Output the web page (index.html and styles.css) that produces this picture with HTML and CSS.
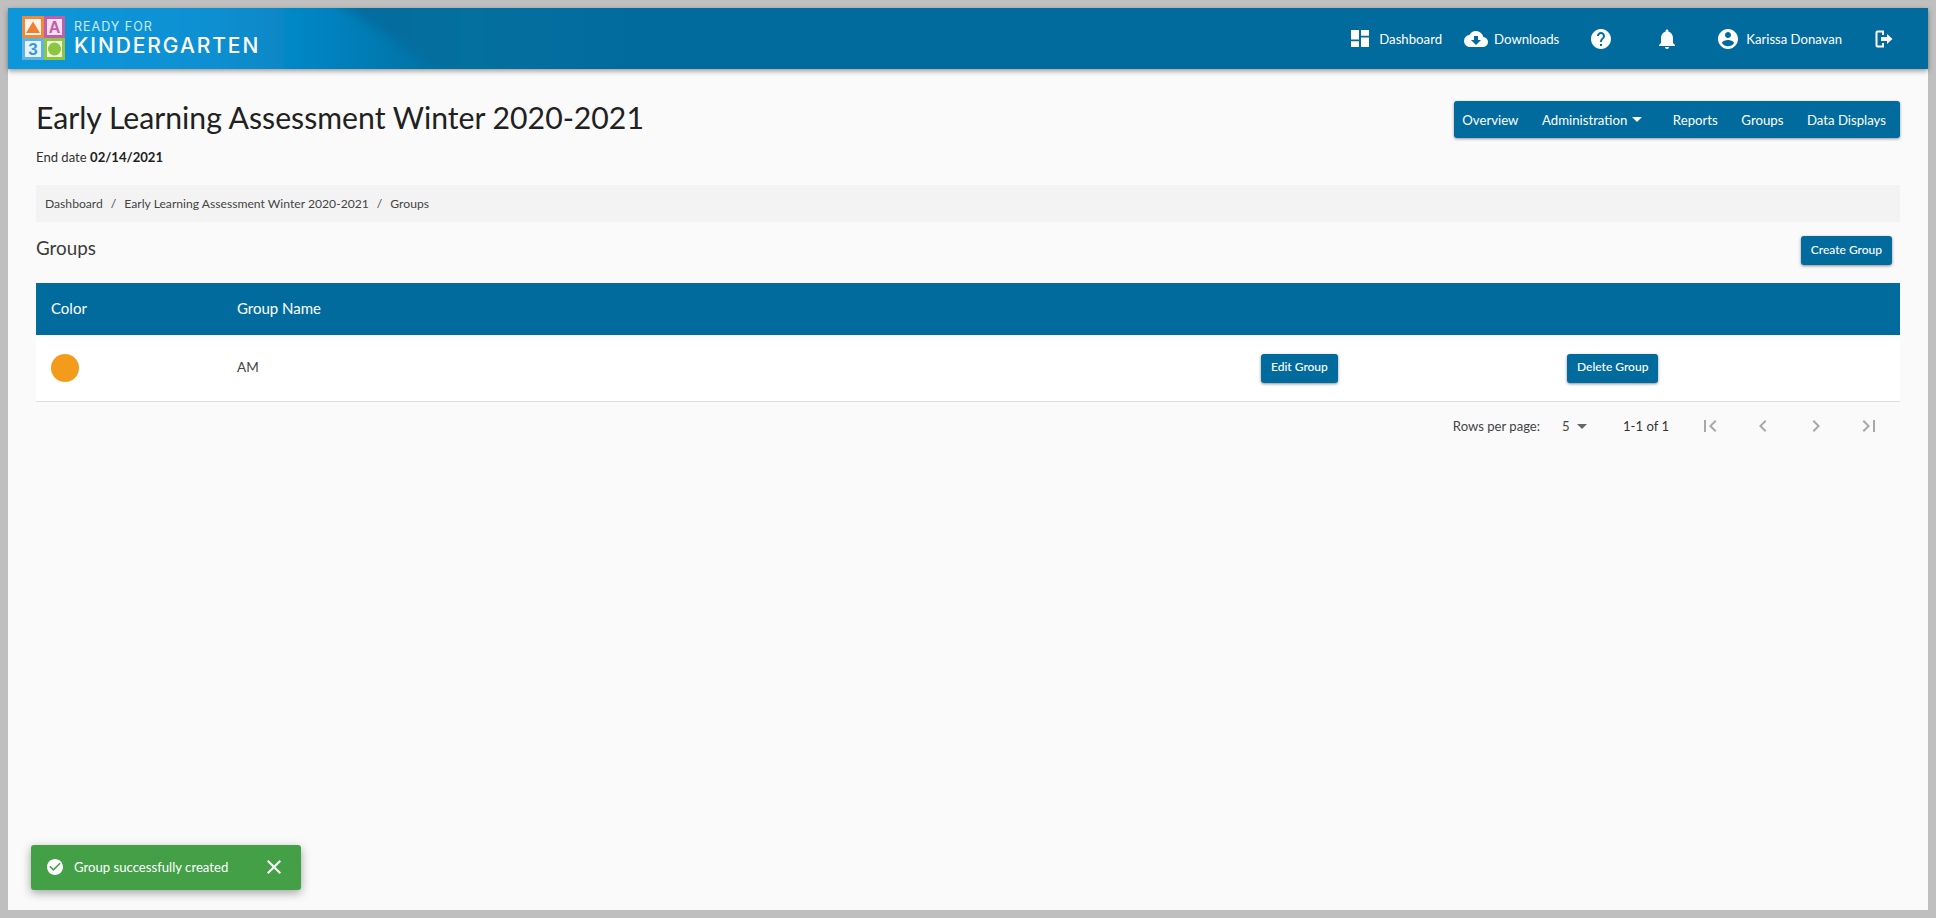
FILE: index.html
```html
<!DOCTYPE html>
<html lang="en">
<head>
<meta charset="utf-8">
<title>Groups</title>
<link rel="stylesheet" href="styles.css">
</head>
<body>
<div class="frame">
  <header class="topbar">
    <svg class="art" width="620" height="61" viewBox="0 0 620 61" aria-hidden="true">
      <defs>
        <linearGradient id="bright" x1="0" y1="0" x2="1" y2="0">
          <stop offset="0" stop-color="#0b97da"/>
          <stop offset=".45" stop-color="#0891d3"/>
          <stop offset=".7" stop-color="#0684c2"/>
          <stop offset="1" stop-color="#046f9f"/>
        </linearGradient>
        <linearGradient id="fade" x1="0" y1="0" x2="1" y2="0">
          <stop offset="0" stop-color="#04699d"/>
          <stop offset=".5" stop-color="#04709f"/>
          <stop offset="1" stop-color="#026b9e"/>
        </linearGradient>
        <filter id="soft" x="-5%" width="110%"><feGaussianBlur stdDeviation="6"/></filter>
      </defs>
      <rect x="300" y="0" width="320" height="61" fill="url(#fade)"/>
      <polygon points="-20,-20 310,-20 445,75 -20,75" fill="url(#bright)" filter="url(#soft)"/>
    </svg>
    <div class="brand">
      <svg class="blocks" width="43" height="44" viewBox="0 0 43 44">
        <rect x="0" y="0" width="22" height="22" fill="#ef8a3c"/>
        <rect x="22" y="0" width="21" height="22" fill="#c05fa8"/>
        <rect x="0" y="22" width="22" height="22" fill="#5fb2e6"/>
        <rect x="22" y="22" width="21" height="22" fill="#8dc63f"/>
        <rect x="3" y="3" width="16" height="16" fill="#fdf3ea"/>
        <rect x="25" y="3" width="15" height="16" fill="#f6dff0"/>
        <rect x="3" y="25" width="16" height="16" fill="#e6f3fb"/>
        <rect x="25" y="25" width="15" height="16" fill="#eef6df"/>
        <path d="M11 5.5 L18 17 H4 Z" fill="#ef8033"/>
        <circle cx="32.5" cy="33" r="6.5" fill="#8dc63f"/>
        <text x="32.5" y="17" text-anchor="middle" class="blockA">A</text>
        <text x="11" y="39" text-anchor="middle" class="block3">3</text>
      </svg>
      <div class="brandtext">
        <span class="ready">READY FOR</span>
        <span class="kinder">KINDERGARTEN</span>
      </div>
    </div>
    <nav class="topnav">
      <a class="toplink dash">
        <svg width="18" height="17" viewBox="3 3 18 18" preserveAspectRatio="none" fill="#fff"><path d="M3 13h8V3H3v10zm0 8h8v-6H3v6zm10 0h8V11h-8v10zm0-18v6h8V3h-8z"/></svg>
        <span>Dashboard</span>
      </a>
      <a class="toplink down">
        <svg width="24" height="24" viewBox="0 0 24 24" fill="#fff"><path d="M19.35 10.04A7.49 7.49 0 0 0 12 4C9.11 4 6.6 5.64 5.35 8.04A5.994 5.994 0 0 0 0 14c0 3.31 2.69 6 6 6h13c2.76 0 5-2.24 5-5 0-2.64-2.05-4.78-4.65-4.96zM17 13l-5 5-5-5h3V9h4v4h3z"/></svg>
        <span>Downloads</span>
      </a>
      <a class="toplink help">
        <svg width="24" height="24" viewBox="0 0 24 24" fill="#fff"><path d="M12 2C6.48 2 2 6.48 2 12s4.48 10 10 10 10-4.48 10-10S17.52 2 12 2zm1 17h-2v-2h2v2zm2.07-7.75l-.9.92C13.45 12.9 13 13.5 13 15h-2v-.5c0-1.1.45-2.1 1.17-2.83l1.24-1.26c.37-.36.59-.86.59-1.41 0-1.1-.9-2-2-2s-2 .9-2 2H8c0-2.21 1.79-4 4-4s4 1.79 4 4c0 .88-.36 1.68-.93 2.25z"/></svg>
      </a>
      <a class="toplink bell">
        <svg width="24" height="24" viewBox="0 0 24 24" fill="#fff"><path d="M12 22c1.1 0 2-.9 2-2h-4c0 1.1.9 2 2 2zm6-6v-5c0-3.07-1.63-5.64-4.5-6.32V4c0-.83-.67-1.5-1.5-1.5s-1.5.67-1.5 1.5v.68C7.64 5.36 6 7.92 6 11v5l-2 2v1h16v-1l-2-2z"/></svg>
      </a>
      <a class="toplink user">
        <svg width="24" height="24" viewBox="0 0 24 24" fill="#fff"><path d="M12 2C6.48 2 2 6.48 2 12s4.48 10 10 10 10-4.48 10-10S17.52 2 12 2zm0 3c1.66 0 3 1.34 3 3s-1.34 3-3 3-3-1.34-3-3 1.34-3 3-3zm0 14.2a7.2 7.2 0 0 1-6-3.22c.03-1.99 4-3.08 6-3.08 1.99 0 5.97 1.09 6 3.08a7.2 7.2 0 0 1-6 3.22z"/></svg>
        <span>Karissa Donavan</span>
      </a>
      <a class="toplink exit">
        <svg width="24" height="24" viewBox="0 0 24 24"><path d="M11 8V4.5H5.5a1 1 0 0 0-1 1v13a1 1 0 0 0 1 1H11V16" fill="none" stroke="#fff" stroke-width="2"/><path d="M9 10h6V7l5.5 5-5.5 5v-3H9z" fill="#fff"/></svg>
      </a>
    </nav>
  </header>

  <main class="content">
    <section class="pagehead">
      <div class="titles">
        <h1>Early Learning Assessment Winter 2020-2021</h1>
        <p class="enddate">End date <strong>02/14/2021</strong></p>
      </div>
      <nav class="subnav">
        <a>Overview</a>
        <a class="admin">Administration <i class="caret"></i></a>
        <a>Reports</a>
        <a>Groups</a>
        <a>Data Displays</a>
      </nav>
    </section>

    <div class="crumbs">
      <a>Dashboard</a><span class="sep">/</span><a>Early Learning Assessment Winter 2020-2021</a><span class="sep">/</span><a>Groups</a>
    </div>

    <section class="grouphead">
      <h2>Groups</h2>
      <button class="btn">Create Group</button>
    </section>

    <section class="tablewrap">
      <div class="row thead">
        <div class="c-color">Color</div>
        <div class="c-name">Group Name</div>
      </div>
      <div class="row tbody">
        <div class="c-color"><span class="dot"></span></div>
        <div class="c-name am">AM</div>
        <div class="c-edit"><button class="btn">Edit Group</button></div>
        <div class="c-del"><button class="btn">Delete Group</button></div>
      </div>
    </section>

    <div class="pager">
      <span class="rpp">Rows per page:</span>
      <span class="rppval">5 <i class="caret grey"></i></span>
      <span class="range">1-1 of 1</span>
      <span class="pagebtns">
        <svg width="24" height="24" viewBox="0 0 24 24" fill="#a8a8a8"><path d="M18.41 16.59L13.82 12l4.59-4.59L17 6l-6 6 6 6zM6 6h2v12H6z"/></svg>
        <svg width="24" height="24" viewBox="0 0 24 24" fill="#a8a8a8"><path d="M15.41 7.41L14 6l-6 6 6 6 1.41-1.41L10.83 12z"/></svg>
        <svg width="24" height="24" viewBox="0 0 24 24" fill="#a8a8a8"><path d="M10 6L8.59 7.41 13.17 12l-4.58 4.59L10 18l6-6z"/></svg>
        <svg width="24" height="24" viewBox="0 0 24 24" fill="#a8a8a8"><path d="M5.59 7.41L10.18 12l-4.59 4.59L7 18l6-6-6-6zM16 6h2v12h-2z"/></svg>
      </span>
    </div>
  </main>

  <div class="snack">
    <svg width="16" height="16" viewBox="2 2 20 20" fill="#fff"><path d="M12 2C6.48 2 2 6.48 2 12s4.48 10 10 10 10-4.48 10-10S17.52 2 12 2zm-2 15l-5-5 1.41-1.41L10 14.17l7.59-7.59L19 8l-9 9z"/></svg>
    <span class="snacktext">Group successfully created</span>
    <svg class="snackx" width="24" height="24" viewBox="0 0 24 24" fill="#fff"><path d="M19 6.41L17.59 5 12 10.59 6.41 5 5 6.41 10.59 12 5 17.59 6.41 19 12 13.41 17.59 19 19 17.59 13.41 12z"/></svg>
  </div>
</div>
</body>
</html>
```
FILE: styles.css
```css
* { box-sizing: border-box; }
html, body { height: 100%; }
body {
  margin: 0;
  background: #bfbfbf;
  padding: 8px;
  font-family: Lato, "Open Sans", sans-serif;
  color: #212121;
  overflow: hidden;
}
.frame {
  position: relative;
  width: 1920px;
  height: 902px;
  background: #fafafa;
  display: flex;
  flex-direction: column;
}
.topbar {
  height: 61px;
  flex: none;
  display: flex;
  align-items: center;
  justify-content: space-between;
  background: #026b9e;
  box-shadow: 0 2px 5px rgba(0,0,0,.4);
  padding: 0 32px 0 14px;
  color: #fff;
  position: relative;
  z-index: 2;
}
.art { position: absolute; left: 0; top: 0; }
.brand { position: relative; display: flex; align-items: center; gap: 9px; margin-top: -1px; }
.blockA { font: 700 16px "Liberation Sans", sans-serif; fill: #c05fa8; }
.block3 { font: 700 17px "Liberation Sans", sans-serif; fill: #3d9ad8; }
.brandtext { display: flex; flex-direction: column; font-family: Inter, sans-serif; }
.ready { font-size: 12.5px; line-height: 15px; letter-spacing: 1px; color: #cdeafa; }
.kinder { font-size: 21px; line-height: 24px; letter-spacing: 1.9px; font-weight: 500; color: #fff; }
.topnav { display: flex; align-items: center; position: relative; }
.toplink { display: flex; align-items: center; font-size: 13.2px; color: #fff; }
.dash { gap: 10px; margin-right: 22px; }
.down { gap: 6px; margin-right: 29.5px; }
.help { margin-right: 42px; }
.bell { margin-right: 37.5px; }
.user { gap: 6px; margin-right: 30px; font-size: 13.1px; }
.content { padding: 0 28px; flex: 1; }
.pagehead {
  display: flex;
  justify-content: space-between;
  align-items: flex-start;
  height: 116px;
  padding: 29px 0 0;
}
h1 { margin: 0; font-size: 30.2px; line-height: 38px; font-weight: 400; color: #212121; }
.enddate { margin: 12px 0 0; font-size: 13.1px; line-height: 18px; color: #333; }
.enddate strong { font-weight: 700; color: #212121; }
.subnav {
  display: flex;
  align-items: center;
  height: 37px;
  margin-top: 3px;
  background: #026b9e;
  border-radius: 3px;
  box-shadow: 0 1px 3px rgba(0,0,0,.4);
  font-size: 13.2px;
  color: #fff;
  padding: 0 14px 0 8px;
  gap: 23.6px;
}
.subnav .admin { margin-right: 7px; display: flex; align-items: center; gap: 5px; }
.caret {
  display: inline-block;
  width: 0; height: 0;
  border-left: 5px solid transparent;
  border-right: 5px solid transparent;
  border-top: 5px solid #fff;
}
.caret.grey { border-top-color: #666; margin-left: 4px; vertical-align: 2px; }
.crumbs {
  height: 37px;
  background: #f3f3f3;
  display: flex;
  align-items: center;
  padding: 0 9px;
  font-size: 12.15px;
  color: #444;
}
.sep { margin: 0 8px; }
.grouphead {
  display: flex;
  justify-content: space-between;
  height: 61px;
  padding: 13px 8px 0 0;
}
h2 { margin: 0; font-size: 18.8px; line-height: 26px; font-weight: 400; color: #3a3a3a; }
.grouphead .btn { margin-top: 1px; }
.btn {
  height: 29px;
  padding: 0 10px 3px;
  border: 0;
  border-radius: 3px;
  background: #026b9e;
  color: #fff;
  font: 500 12px Lato, sans-serif;
  box-shadow: 0 1px 3px rgba(0,0,0,.45);
}
.row { display: flex; align-items: center; padding-left: 15px; }
.thead { height: 52px; padding-bottom: 3px; background: #026b9e; color: #fff; font-size: 15px; }
.tbody { height: 67px; background: #fff; border-bottom: 1px solid #ddd; font-size: 13.5px; }
.c-color { width: 186px; }
.c-name { width: 1024px; }
.am { color: #444; padding-bottom: 2px; }
.c-edit { width: 306px; }
.dot { display: block; width: 28px; height: 28px; border-radius: 50%; background: #f39c1c; }
.pager {
  display: flex;
  align-items: center;
  justify-content: flex-end;
  height: 48px;
  font-size: 13.1px;
  color: #444;
  padding-right: 19px;
}
.rpp { margin-right: 22px; }
.rppval { margin-right: 36px; }
.range { margin-right: 29px; color: #333; }
.pagebtns { display: flex; gap: 29px; }
.snack {
  position: absolute;
  left: 23px;
  bottom: 20px;
  width: 270px;
  height: 45px;
  background: #43a047;
  border-radius: 3px;
  box-shadow: 0 3px 10px rgba(0,0,0,.35);
  color: #fff;
  display: flex;
  align-items: center;
  padding: 0 15px 2px 16px;
  font-size: 13.15px;
}
.snacktext { margin-left: 11px; flex: 1; }
```
